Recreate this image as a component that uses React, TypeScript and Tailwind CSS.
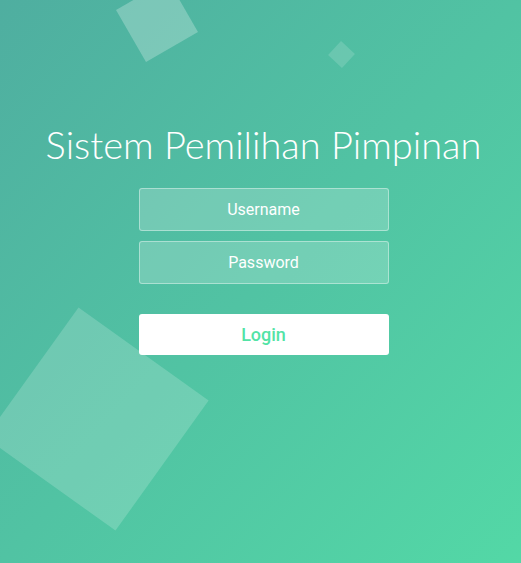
import React from "react";

export default function App() {
  return (
    <div
      className="relative w-full h-[563px] overflow-hidden bg-[linear-gradient(to_bottom_right,#4faea0,#53d8a6)]"
      style={{ fontFamily: "Roboto, 'Liberation Sans', sans-serif" }}
    >
      <div className="absolute left-[127px] top-[-9px] w-[60px] h-[60px] bg-white/25 rotate-[60deg]" />
      <div className="absolute left-[332px] top-[45px] w-[19px] h-[19px] bg-white/15 rotate-[43deg]" />
      <div className="absolute left-[17px] top-[339px] w-[160px] h-[160px] bg-white/[0.18] rotate-[35.6deg]" />

      <div className="relative flex flex-col items-center pt-[119px] pl-[6px]">
        <h1
          className="text-white text-[38px] leading-[50px] font-light m-0"
          style={{ fontFamily: "Lato, 'Open Sans', sans-serif" }}
        >
          Sistem Pemilihan Pimpinan
        </h1>
        <div className="flex flex-col items-center mt-[19px]">
          <div className="w-[250px] h-[43px] rounded-[3px] border border-white/40 bg-white/20 flex items-center justify-center text-white text-[16px]">
            Username
          </div>
          <div className="w-[250px] h-[43px] rounded-[3px] border border-white/40 bg-white/20 flex items-center justify-center text-white text-[16px] mt-[10px]">
            Password
          </div>
          <button className="w-[250px] h-[41px] rounded-[3px] bg-white flex items-center justify-center text-[#53e3a6] text-[18px] font-medium mt-[30px]">
            Login
          </button>
        </div>
      </div>
    </div>
  );
}
